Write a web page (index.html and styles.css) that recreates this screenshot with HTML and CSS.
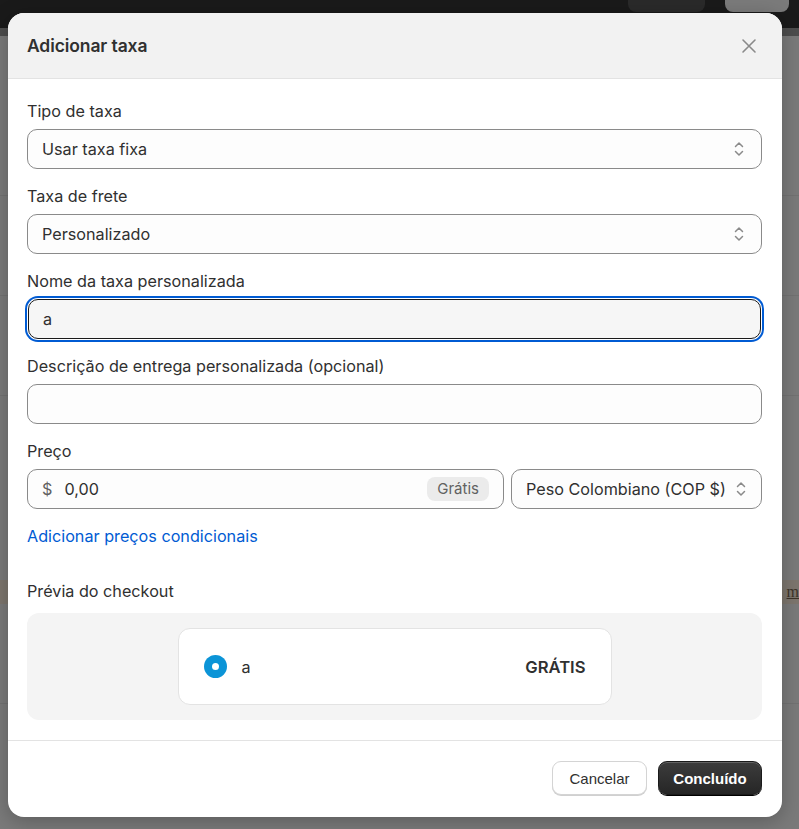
FILE: index.html
```html
<!DOCTYPE html>
<html lang="pt">
<head>
<meta charset="utf-8">
<title>Adicionar taxa</title>
<link rel="stylesheet" href="styles.css">
</head>
<body>
<div class="app">
  <div class="topbar">
    <div class="tb-btn tb-dark"></div>
    <div class="tb-btn tb-gray"></div>
  </div>
  <div class="app-body">
    <div class="bg-row"></div>
    <div class="bg-row"></div>
    <div class="bg-row"></div>
    <div class="bg-banner"><span class="bg-link">m</span></div>
    <div class="bg-row"></div>
  </div>
</div>

<div class="modal" role="dialog">
  <div class="modal-header">
    <h2 class="modal-title">Adicionar taxa</h2>
    <button class="close-btn" aria-label="Fechar">
      <svg width="16" height="16" viewBox="0 0 16 16"><path d="M2 2 L14 14 M14 2 L2 14" stroke="#8a8a8a" stroke-width="1.6" stroke-linecap="round" fill="none"/></svg>
    </button>
  </div>

  <div class="modal-body">
    <div class="field">
      <label class="label">Tipo de taxa</label>
      <div class="control select">
        <span class="value">Usar taxa fixa</span>
        <svg class="chev" width="10" height="16" viewBox="0 0 10 16"><path d="M1.5 5.5 L5 2 L8.5 5.5 M1.5 10.5 L5 14 L8.5 10.5" stroke="#8a8a8a" stroke-width="1.5" fill="none" stroke-linecap="round" stroke-linejoin="round"/></svg>
      </div>
    </div>

    <div class="field">
      <label class="label">Taxa de frete</label>
      <div class="control select">
        <span class="value">Personalizado</span>
        <svg class="chev" width="10" height="16" viewBox="0 0 10 16"><path d="M1.5 5.5 L5 2 L8.5 5.5 M1.5 10.5 L5 14 L8.5 10.5" stroke="#8a8a8a" stroke-width="1.5" fill="none" stroke-linecap="round" stroke-linejoin="round"/></svg>
      </div>
    </div>

    <div class="field">
      <label class="label">Nome da taxa personalizada</label>
      <div class="control focused">
        <span class="value">a</span>
      </div>
    </div>

    <div class="field">
      <label class="label">Descrição de entrega personalizada (opcional)</label>
      <div class="control"></div>
    </div>

    <div class="field">
      <label class="label">Preço</label>
      <div class="price-row">
        <div class="control price">
          <span class="prefix">$</span>
          <span class="value">0,00</span>
          <span class="badge">Grátis</span>
        </div>
        <div class="control select currency">
          <span class="value">Peso Colombiano (COP $)</span>
          <svg class="chev" width="10" height="16" viewBox="0 0 10 16"><path d="M1.5 5.5 L5 2 L8.5 5.5 M1.5 10.5 L5 14 L8.5 10.5" stroke="#8a8a8a" stroke-width="1.5" fill="none" stroke-linecap="round" stroke-linejoin="round"/></svg>
        </div>
      </div>
    </div>

    <a class="link" href="#">Adicionar preços condicionais</a>

    <div class="preview">
      <div class="label">Prévia do checkout</div>
      <div class="preview-box">
        <div class="preview-card">
          <span class="radio"><span class="radio-dot"></span></span>
          <span class="rate-name">a</span>
          <span class="rate-price">GRÁTIS</span>
        </div>
      </div>
    </div>
  </div>

  <div class="modal-footer">
    <button class="btn btn-secondary">Cancelar</button>
    <button class="btn btn-primary">Concluído</button>
  </div>
</div>
</body>
</html>
```

FILE: styles.css
```css
* { box-sizing: border-box; }

html, body {
  margin: 0;
  padding: 0;
  height: 100%;
}

body {
  font-family: Inter, "Noto Sans", "Liberation Sans", sans-serif;
  color: #303030;
  background: #7a7a7a;
  overflow: hidden;
}

/* background app shell (under overlay) */
.app {
  height: 829px;
  display: flex;
  flex-direction: column;
}

.topbar {
  height: 28px;
  background: #1a1a1a;
  display: flex;
  justify-content: flex-end;
  align-items: flex-start;
  gap: 20px;
  padding-right: 10px;
}

.tb-btn {
  height: 12px;
  border-radius: 0 0 8px 8px;
}

.tb-dark { width: 77px; background: #2a2a2a; }
.tb-gray { width: 64px; background: #7b7b7b; }

.app-body {
  flex: 1;
  background: #7a7a7a;
  border-top: 8px solid #4d4d4d;
  display: flex;
  flex-direction: column;
  padding-top: 60px;
}

.bg-row {
  height: 100px;
  border-bottom: 1px solid #727272;
}

.bg-banner {
  height: 24px;
  background: #7d766e;
  display: flex;
  justify-content: flex-end;
  align-items: center;
  padding-right: 0;
  margin-top: 184px;
}

.bg-link {
  font-family: "Liberation Serif", serif;
  font-size: 16px;
  color: #3c3328;
  text-decoration: underline;
}

/* modal */
.modal {
  position: absolute;
  top: 13px;
  left: 8px;
  width: 774px;
  height: 804px;
  background: #ffffff;
  border-radius: 16px;
  overflow: hidden;
  display: flex;
  flex-direction: column;
  box-shadow: 0 4px 20px rgba(0,0,0,0.25);
}

.modal-header {
  height: 66px;
  background: #f2f2f2;
  border-bottom: 1px solid #e3e3e3;
  display: flex;
  align-items: center;
  justify-content: space-between;
  padding: 0 25px 0 19px;
  flex-shrink: 0;
}

.modal-title {
  margin: 0;
  font-size: 17.5px;
  font-weight: 600;
  color: #303030;
  letter-spacing: -0.1px;
}

.close-btn {
  border: 0;
  background: none;
  padding: 0;
  width: 16px;
  height: 16px;
  display: flex;
}

.modal-body {
  flex: 1;
  padding: 22px 20px 20px 19px;
  display: flex;
  flex-direction: column;
}

.field {
  display: flex;
  flex-direction: column;
  gap: 8px;
  margin-bottom: 17px;
}

.label {
  font-size: 16.2px;
  line-height: 20px;
  color: #303030;
}

.control {
  height: 40px;
  border: 1px solid #8a8a8a;
  border-radius: 10px;
  background: #fdfdfd;
  display: flex;
  align-items: center;
  padding: 0 14px;
  font-size: 16.2px;
  color: #303030;
}

.control .value { flex: 1; white-space: nowrap; }

.select .chev { flex-shrink: 0; margin-right: 3px; }

.focused {
  background: #f6f6f6;
  border: 1px solid #1a1a1a;
  box-shadow: 0 0 0 1px #ffffff, 0 0 0 3px #005bd3;
  margin: 0 1px;
}

.price-row {
  display: flex;
  gap: 7px;
}

.price {
  flex: 1;
  padding-right: 14px;
}

.prefix {
  color: #616161;
  margin-right: 12px;
}

.badge {
  background: #ebebeb;
  color: #616161;
  font-size: 15px;
  border-radius: 8px;
  padding: 3px 10px;
  line-height: 18px;
}

.currency {
  width: 251px;
  flex-shrink: 0;
  padding-right: 12px;
}

.link {
  font-size: 16.2px;
  color: #005bd3;
  text-decoration: none;
  line-height: 20px;
  align-self: flex-start;
}

.preview {
  margin-top: 35px;
  display: flex;
  flex-direction: column;
  gap: 12px;
}

.preview-box {
  background: #f4f4f4;
  border-radius: 12px;
  height: 107px;
  display: flex;
  justify-content: center;
  align-items: center;
}

.preview-card {
  width: 434px;
  height: 77px;
  background: #ffffff;
  border: 1px solid #e3e3e3;
  border-radius: 12px;
  display: flex;
  align-items: center;
  padding: 0 25px;
  font-size: 16.2px;
}

.radio {
  width: 23px;
  height: 23px;
  border-radius: 50%;
  background: #0b94d7;
  display: flex;
  align-items: center;
  justify-content: center;
  margin-right: 15px;
}

.radio-dot {
  width: 7px;
  height: 7px;
  border-radius: 50%;
  background: #ffffff;
}

.rate-name { flex: 1; }

.rate-price {
  font-weight: 600;
  font-size: 16.6px;
  color: #303030;
}

.modal-footer {
  border-top: 1px solid #e3e3e3;
  height: 77px;
  display: flex;
  justify-content: flex-end;
  align-items: center;
  gap: 11px;
  padding: 0 20px 2px 0;
  flex-shrink: 0;
}

.btn {
  height: 34px;
  border-radius: 9px;
  font-family: "Liberation Sans", Arial, sans-serif;
  font-size: 15px;
  padding: 0 14px;
  cursor: pointer;
}

.btn-secondary {
  background: #ffffff;
  border: 1px solid #d4d4d4;
  color: #303030;
  box-shadow: 0 1px 0 #d0d0d0;
  width: 95px;
}

.btn-primary {
  background: linear-gradient(#3c3c3c, #262626);
  border: 1px solid #1a1a1a;
  color: #ffffff;
  font-weight: 700;
  box-shadow: inset 0 1px 0 rgba(255,255,255,0.2), 0 1px 0 #000;
  width: 104px;
}
```
